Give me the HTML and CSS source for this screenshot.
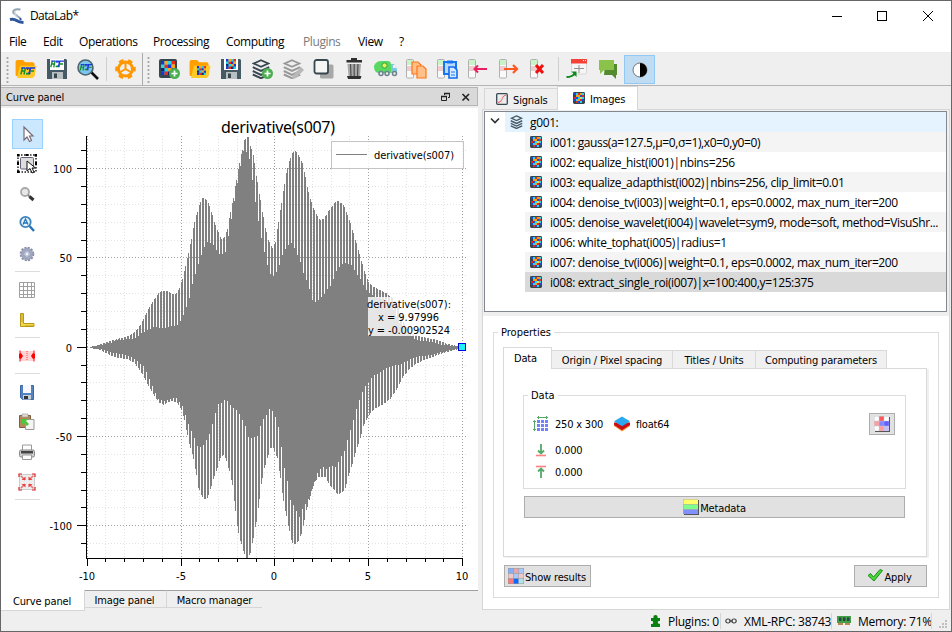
FILE: index.html
```html
<!DOCTYPE html>
<html lang="en">
<head>
<meta charset="utf-8">
<title>DataLab*</title>
<link rel="stylesheet" href="styles.css">
</head>
<body>
<svg class="defs" width="0" height="0" aria-hidden="true">
  <symbol id="mosaic" viewBox="0 0 12 12">
    <rect width="12" height="12" fill="#28d8e8"/>
    <path fill="#1238d8" d="M0 0h3v3H0zM6 3h3v3H6zM0 9h3v3H0zM9 6h3v3H9z"/>
    <path fill="#f02818" d="M3 3h3v3H3zM9 0h3v3H9zM3 9h3v3H3z"/>
    <path fill="#ffa418" d="M3 0h3v3H3zM9 3h3v3H9zM6 6h3v3H6z"/>
    <path fill="#102878" d="M6 9h3v3H6zM0 6h3v3H0z"/>
  </symbol>
  <symbol id="image" viewBox="0 0 12 12">
    <rect width="12" height="12" rx="1.4" fill="#37474f"/>
    <path fill="#1848e0" d="M1 1h2v2H1zM7 3h2v2H7zM3 5h2v2H3zM9 7h2v2H9zM1 7h2v2H1zM5 9h2v2H5z"/>
    <path fill="#ff9c10" d="M3 3h2v2H3zM5 3h2v2H5zM7 1h2v2H7zM5 7h2v2H5z"/>
    <path fill="#e82820" d="M5 1h2v2H5zM1 5h2v2H1zM9 3h2v2H9zM3 9h2v2H3zM7 7h2v2H7z"/>
    <path fill="#28d8e8" d="M3 1h2v2H3zM9 1h2v2H9zM5 5h2v2H5zM9 5h2v2H9zM3 7h2v2H3zM7 9h2v2H7z"/>
    <path fill="#f4d840" d="M7 5h2v2H7z"/>
  </symbol>
  <symbol id="plus" viewBox="0 0 11 11"><circle cx="5.500" cy="5.500" r="5.500" fill="#4caf50"/><path d="M5.500 2.500v6M2.500 5.500h6" stroke="#fff" stroke-width="1.700"/></symbol>
  <symbol id="folder" viewBox="0 0 22 19"><path fill="#ffa000" d="M0 2q0-2 2-2h6l2 2.500h8q2 0 2 2V17H1q-1 0-1-2z"/><path fill="#ffca28" d="M4.500 6H21q1.400 0 1 1.400l-2.300 9.700q-.5 1.900-2 1.900H1.500z"/></symbol>
  <symbol id="floppy" viewBox="0 0 20 20"><path fill="#455a64" d="M0 0h19l1 1v19H0z"/><path fill="#fff" d="M3 0h14v11H3z"/><path fill="#b8c0c4" d="M5 13h11v7H5z"/><path fill="#37474f" d="M7 14.500h3V19H7z"/></symbol>
  <symbol id="hdf" viewBox="0 0 15 8"><g fill="none" stroke-width="1.400"><path stroke="#129028" d="M2.500 .5L.8 7.500M5.500 .5L4 7.500M2 4h3"/><path stroke="#1838e0" d="M1.500 1H5M6 1h3q2 2-.5 5.500H6.500M15 1h-4.500L9.500 7.500M7.500 1v2"/><path stroke="#129028" d="M10.500 4H14M6 6.700h3"/></g></symbol>
  <symbol id="layers" viewBox="0 0 18 20"><path fill="none" stroke="currentColor" stroke-width="1.800" d="M9 1.200l7.200 3.300L9 7.800 1.800 4.500z"/><path fill="none" stroke="currentColor" stroke-width="2" d="M.8 8.200L9 12l8.200-3.800M.8 12L9 15.800 17.200 12M.8 15.500L9 19.200l8.200-3.700"/></symbol>
  <symbol id="stack" viewBox="0 0 8 20"><rect x=".5" y=".5" width="7" height="18.500" rx="1" fill="#fafafa" stroke="#b0b0b0"/><path fill="#c8f5c8" d="M1 1h6v5H1z"/><path fill="#f0cccc" d="M1 7h6v5H1z"/></symbol>
</svg>

<div class="window">
  <header class="titlebar">
    <svg class="logo" viewBox="0 0 16 16"><path d="M11.500 1.500Q3 .5 4.500 5q4 3.500 6.500 5" fill="none" stroke="#90a4b0" stroke-width="2"/><path d="M6 3q-1 4 3 7" fill="none" stroke="#cfd8dc" stroke-width="1.500"/><path d="M1 11.500q4-.8 6.500 1t7 2" fill="none" stroke="#2f559c" stroke-width="3"/><path d="M11 10l1 2" stroke="#2f559c" stroke-width="2"/></svg>
    <h1>DataLab*</h1>
    <div class="caption-buttons">
      <svg viewBox="0 0 46 28"><path d="M18 14.500h10" stroke="#000"/></svg>
      <svg viewBox="0 0 46 28"><rect x="17.500" y="9.500" width="9" height="9" fill="none" stroke="#000"/></svg>
      <svg viewBox="0 0 46 28"><path d="M17 9l10 10M27 9L17 19" stroke="#000"/></svg>
    </div>
  </header>
  <nav class="menubar">
    <span class="m-file">File</span><span class="m-edit">Edit</span><span class="m-ops">Operations</span><span class="m-proc">Processing</span><span class="m-comp">Computing</span><span class="m-plug">Plugins</span><span class="m-view">View</span><span>?</span>
  </nav>

  <div class="toolbar">
    <i class="grip"></i>
    <svg class="ti" viewBox="0 0 31 30"><use href="#folder" x="5" y="6" width="22" height="18"/><use href="#hdf" x="10" y="13" width="15" height="8"/></svg>
    <svg class="ti" viewBox="0 0 31 30"><use href="#floppy" x="6" y="5" width="20" height="20"/><use href="#hdf" x="9" y="6" width="14" height="8"/></svg>
    <svg class="ti" viewBox="0 0 31 30"><path d="M19 18l7 7" stroke="#111" stroke-width="2.600"/><circle cx="13.500" cy="13.500" r="7.500" fill="#7cc5ee" stroke="#50626c" stroke-width="1.600"/><use href="#hdf" x="7.500" y="9.500" width="13" height="7.500"/></svg>
    <i class="sep s1"></i>
    <svg class="ti gear" viewBox="0 0 31 30"><g fill="none" stroke="#ff9800"><circle cx="15.500" cy="15" r="7" stroke-width="3"/><circle cx="15.500" cy="15" r="9" stroke-width="2.600" stroke-dasharray="4.700 4.725" stroke-dashoffset="2.350"/><path d="M15.500 15V8M15.500 15l-6 3.500M15.500 15l6 3.500" stroke-width="2"/></g></svg>
    <i class="divider"></i><i class="grip g2"></i>
    <svg class="ti" viewBox="0 0 31 30"><rect x="6" y="5" width="18" height="19" rx="2" fill="#37474f"/><use href="#mosaic" x="8" y="7" width="14" height="14"/><use href="#plus" x="16" y="14" width="11" height="11"/></svg>
    <svg class="ti" viewBox="0 0 31 30"><use href="#folder" x="5" y="6" width="22" height="18"/><use href="#mosaic" x="13" y="12" width="9" height="9"/></svg>
    <svg class="ti" viewBox="0 0 31 30"><use href="#floppy" x="6" y="5" width="20" height="20"/><use href="#mosaic" x="11" y="5" width="10" height="10"/></svg>
    <svg class="ti dark" viewBox="0 0 31 30"><use href="#layers" x="6" y="5" width="18" height="20"/><use href="#plus" x="16" y="14" width="11" height="11"/></svg>
    <svg class="ti gray" viewBox="0 0 31 30"><use href="#layers" x="6" y="5" width="18" height="20"/><path d="M15 25l1-4 8-8 3 3-8 8z" fill="#b8b8b8"/></svg>
    <svg class="ti" viewBox="0 0 31 30"><rect x="12" y="10.500" width="13.500" height="14" rx="1.500" fill="#a8a8a8"/><rect x="6.500" y="6" width="13.500" height="13.500" rx="2" fill="#f5f5f5" stroke="#37474f" stroke-width="1.800"/></svg>
    <svg class="ti" viewBox="0 0 31 30"><path fill="#303030" d="M12 4h6v2h5v2.500H7.500V6H12zM8 22h14.500l-1 3H9z"/><path fill="#a8a8a8" d="M8.500 10h13.500l-1 12H9.500z"/><path stroke="#505050" stroke-width="1.200" d="M11.500 10l.5 12M15.200 10v12M19 10l-.5 12"/></svg>
    <svg class="ti" viewBox="0 0 31 30"><path d="M4 12q2-5 7-5h7q3 0 3 4v8H8q-4-1-4-7z" fill="#58d862"/><circle cx="14.500" cy="11.500" r="2.600" fill="#e8f060" stroke="#2fa83c"/><path d="M21 10h3l3 5v4h-6z" fill="#7cc8dc"/><path d="M23 11h2l1 3h-3z" fill="#eef"/><g fill="#eee" stroke="#6c8090" stroke-width="1.500"><circle cx="11" cy="19.500" r="2"/><circle cx="17" cy="19.500" r="2"/><circle cx="24.500" cy="19.500" r="2"/></g></svg>
    <svg class="ti" viewBox="0 0 31 30"><use href="#stack" x="5" y="5" width="8" height="20"/><g fill="#ffc089" stroke="#ff7518" stroke-width="1.200"><path d="M11 8h6l3 3v9h-9z"/><path d="M16 12h6l3 3v9h-9z"/></g></svg>
    <svg class="ti" viewBox="0 0 31 30"><use href="#stack" x="5" y="5" width="8" height="20"/><path d="M12 8h12v12H12z" fill="#b8dafc" stroke="#1877f0" stroke-width="2"/><path d="M15 6.500h6v3h-6z" fill="#1877f0"/><path d="M17 13h5l3 3v8h-8z" fill="#d8ebff" stroke="#0f6cf0" stroke-width="1.600"/><path d="M19 18h4M19 21h4" stroke="#1877f0"/></svg>
    <svg class="ti" viewBox="0 0 31 30"><use href="#stack" x="5" y="5" width="8" height="20"/><path d="M11 15h13M15 11.500L11.500 15l3.500 3.500" fill="none" stroke="#e91e63" stroke-width="2"/></svg>
    <svg class="ti" viewBox="0 0 31 30"><use href="#stack" x="5" y="5" width="8" height="20"/><path d="M10 15h12M19 11l4 4-4 4" fill="none" stroke="#ff5722" stroke-width="2.200"/></svg>
    <svg class="ti" viewBox="0 0 31 30"><use href="#stack" x="5" y="5" width="8" height="20"/><path d="M11 11l7 8M18 11l-7 8" stroke="#f01010" stroke-width="3"/></svg>
    <i class="sep s2"></i>
    <svg class="ti" viewBox="0 0 31 30"><rect x="9.500" y="5.500" width="15" height="14.500" rx="1" fill="#f6f6f6" stroke="#d8d8d8"/><path fill="#f44336" d="M9 5h16v4.500H9z"/><path fill="#fff" d="M21 6h1v1h-1zM23 6h1v1h-1z"/><path d="M17 11v8M12 14.500h10" stroke="#909090"/><path d="M4.500 23q6 0 9-4" fill="none" stroke="#0a8a1a" stroke-width="2"/><path fill="#0a8a1a" d="M9.500 17.500h5V23z"/></svg>
    <svg class="ti" viewBox="0 0 31 30"><path d="M12 10h12v11h-1v4l-4-4h-8z" fill="#558b2f"/><path d="M6 6h15v10H11l-4 4v-4H6z" fill="#8bc34a"/></svg>
    <span class="active-tool"><svg viewBox="0 0 16 16"><circle cx="8" cy="8" r="7" fill="#fff" stroke="#777"/><path d="M8 1a7 7 0 0 1 0 14z"/></svg></span>
  </div>

  <main class="main">
    <section class="dock">
      <div class="dock-title"><span class="tah">Curve panel</span>
        <svg viewBox="0 0 36 14"><path d="M3.500 5V3.500h5v4H7M.5 6.500h5v4h-5z" fill="none" stroke="#222" stroke-width="1"/><path d="M3 3.500h6M0 6.500h6" stroke="#222" stroke-width="1.500"/><path d="M21.500 4l6.500 6.500M28 4l-6.500 6.500" stroke="#222" stroke-width="1.600"/></svg>
      </div>
      <div class="dock-body">
        <aside class="plot-tools">
          <span class="pt selected"><svg viewBox="0 0 20 20"><path d="M7 3v13l3-3 2.500 4.500 2-1L12.500 12H16z" fill="#fff" stroke="#776c76" stroke-width="1.200"/></svg></span>
          <span class="pt"><svg viewBox="0 0 20 20"><rect x="1" y="1" width="18" height="17" fill="#fff" stroke="#222" stroke-width="1.500" stroke-dasharray="1.500 1.500"/><rect x="3.500" y="3.500" width="13" height="11.500" rx="1" fill="#ddd" stroke="#67617c"/><path d="M0 0h2.500v2.500H0zM8.500 0h3v2h-3zM17.500 0H20v2.500h-2.500zM0 8h2v3H0zM18 8h2v3h-2zM0 16.500h2.500V19H0z"/><path d="M10 7v10l3-2.500 2 4.500 2-1-2-4h3.500z" fill="#fff" stroke="#111"/></svg></span>
          <span class="pt"><svg viewBox="0 0 20 20"><circle cx="8" cy="8" r="4" fill="#e8e8e8" stroke="#a8a8a8" stroke-width="1.800"/><path d="M11 11l2 2" stroke="#888" stroke-width="2"/><path d="M12.500 12.500l4 3.500" stroke="#333" stroke-width="3"/></svg></span>
          <span class="pt"><svg viewBox="0 0 20 20"><circle cx="8.500" cy="8" r="5.200" fill="#e8f4fc" stroke="#3d83bd" stroke-width="1.800"/><path d="M12.500 12l4.500 5" stroke="#2674b4" stroke-width="2.400"/><path d="M6 10.500l2.500-5.500 2.500 5.500M7 9h3" fill="none" stroke="#2674b4" stroke-width="1.300"/></svg></span>
          <span class="pt"><svg viewBox="0 0 20 20"><circle cx="10" cy="10" r="4.300" fill="none" stroke="#a0a8c0" stroke-width="3.800"/><circle cx="10" cy="10" r="6.500" fill="none" stroke="#868da4" stroke-width="1.600" stroke-dasharray="2.100 1.300"/><circle cx="10" cy="10" r="2" fill="#eef" stroke="#b0b8cc"/></svg></span>
          <i></i>
          <span class="pt"><svg viewBox="0 0 20 20"><path d="M2.500 2.500h15v15h-15zM6.500 2v16M10.500 2v16M14.500 2v16M2 6.500h16M2 10.500h16M2 14.500h16" fill="none" stroke="#a0a0a0"/></svg></span>
          <span class="pt ruler"><svg viewBox="0 0 20 20"><path d="M3.500 3.500h3v10h10.500v3H3.500z" fill="#f0d84a" stroke="#b89a18"/><path d="M4 5h2M4 7h2M4 9h2M4 11h2M9 15v1.500M11 15v1.500M13 15v1.500M15 15v1.500" stroke="#a08410" stroke-width=".6"/></svg></span>
          <i></i>
          <span class="pt cut"><svg viewBox="0 0 20 20"><path fill="#ffd4d4" d="M3 5h14v10H3z"/><path d="M3 4.500v11M17 4.500v11" stroke="#f00"/><path d="M10 5v10" stroke="#f44" stroke-dasharray="1 1"/><path fill="#f00" d="M2 8l2-1 2 3-2 3-2-1zM18 8l-2-1-2 3 2 3 2-1z"/></svg></span>
          <i></i>
          <span class="pt"><svg viewBox="0 0 20 20"><path d="M3.500 3.500h13v14h-11l-2-2z" fill="#5482c0" stroke="#3c68a8"/><path fill="#f8f8ff" d="M6 3h8v8H6z"/><path fill="#c8d0d8" d="M6 13h8v4.500H6z"/><path fill="#333" d="M7 14h4v3H7z"/></svg></span>
          <span class="pt"><svg viewBox="0 0 20 20"><path d="M2.500 3.500h11v12h-11z" fill="#b48858" stroke="#80603c"/><path fill="#ddd" stroke="#999" stroke-width=".6" d="M5 2h6v3H5z"/><path d="M8.500 7.500h8.500v10H8.500z" fill="#f4f4f4" stroke="#999"/><path d="M5 7h6L9 9l3 3-2 2-3-3-2 2z" fill="#4cc83c"/></svg></span>
          <span class="pt"><svg viewBox="0 0 20 20"><path d="M5.500 3h9v6h-9z" fill="#fff" stroke="#999"/><rect x="2.500" y="8" width="15" height="7" rx="1.500" fill="#d0d0d0" stroke="#888"/><path fill="#444" d="M4 9h12v2.500H4z"/><path d="M5.500 13h9v4.500h-9z" fill="#fff" stroke="#999"/></svg></span>
          <span class="pt"><svg viewBox="0 0 20 20"><rect x="2.500" y="2.500" width="15" height="15" rx="3" fill="#eee" stroke="#ccc"/><path d="M4 4l4 4M16 4l-4 4M4 16l4-4M16 16l-4-4" stroke="#e87070" stroke-width="1.500"/><path fill="#e84040" d="M4.500 8h4V4.500zM15.500 8h-4V4.500zM4.500 12h4v3.500zM15.500 12h-4v3.500z"/><path d="M2 5V2h3M15 2h3v3M2 15v3h3M18 15v3h-3" fill="none" stroke="#d02020" stroke-width="1.200"/></svg></span>
          <i></i>
        </aside>
        <svg class="plot" id="plot" viewBox="45 108 433 482" width="433" height="482"></svg>
      </div>
      <div class="dock-tabs tah"><b class="current">Curve panel</b><b class="t2">Image panel</b><b class="t3">Macro manager</b></div>
    </section>

    <section class="side">
      <div class="side-tabs tah">
        <b><svg viewBox="0 0 12 12"><rect x=".7" y=".7" width="10.600" height="10.600" rx="1" fill="#eee" stroke="#37474f" stroke-width="1.300"/><path d="M2 9.500q3 0 4-3.500t4-4" fill="none" stroke="#f05050"/><path d="M2 6h8M6 2v8" stroke="#ccc" stroke-width=".5"/></svg>Signals</b>
        <b class="current"><svg><use href="#image"/></svg>Images</b>
      </div>
      <div class="side-pane">
        <div class="tree-wrap">
          <ul class="tree">
            <li class="group"><svg class="chev" viewBox="0 0 10 8"><path d="M1 1.500l4 4 4-4" fill="none" stroke="#333" stroke-width="1.700"/></svg><span><svg class="gl" ><use href="#layers"/></svg>g001:</span></li>
            <li><svg><use href="#image"/></svg>i001: gauss(a=127.5,μ=0,σ=1),x0=0,y0=0)</li>
            <li><svg><use href="#image"/></svg>i002: equalize_hist(i001)|nbins=256</li>
            <li><svg><use href="#image"/></svg>i003: equalize_adapthist(i002)|nbins=256, clip_limit=0.01</li>
            <li><svg><use href="#image"/></svg>i004: denoise_tv(i003)|weight=0.1, eps=0.0002, max_num_iter=200</li>
            <li><svg><use href="#image"/></svg>i005: denoise_wavelet(i004)|wavelet=sym9, mode=soft, method=VisuShr...</li>
            <li><svg><use href="#image"/></svg>i006: white_tophat(i005)|radius=1</li>
            <li><svg><use href="#image"/></svg>i007: denoise_tv(i006)|weight=0.1, eps=0.0002, max_num_iter=200</li>
            <li class="picked"><svg><use href="#image"/></svg>i008: extract_single_roi(i007)|x=100:400,y=125:375</li>
          </ul>
        </div>
        <div class="props tah">
          <fieldset class="prop-box"><legend>Properties</legend>
            <div class="prop-tabs"><b class="current">Data</b><b class="p2">Origin / Pixel spacing</b><b class="p3">Titles / Units</b><b class="p4">Computing parameters</b></div>
            <div class="prop-pane">
              <fieldset class="data-box"><legend>Data</legend>
                <div class="data-row">
                  <svg viewBox="0 0 16 16"><path fill="#6f83ff" d="M4 4h3v3H4zM8 4h3v3H8zM12 4h3v3h-3zM4 8h3v3H4zM8 8h3v3H8zM12 8h3v3h-3zM4 12h3v3H4zM8 12h3v3H8zM12 12h3v3h-3z"/><path d="M4 1.500h11M5.500 0v3M13.500 0v3M1.500 4v11M0 5.500h3M0 13.500h3" stroke="#55a868"/></svg>
                  <span class="dims">250 x 300</span>
                  <svg viewBox="0 0 16 16"><path fill="#ff9838" d="M0 10l8 5.500 8-5.500V8H0z"/><path fill="#c80f18" d="M0 6.500v2.500l8 5.200L16 9V6.500z"/><path fill="#2aa8f0" d="M0 5.200L8 .5l8 4.700-8 5z"/></svg>
                  <span>float64</span>
                  <span class="grid-btn"><svg viewBox="0 0 16 16"><path fill="#555" d="M1 1h15v15H1z"/><path fill="#c8c8d0" d="M0 0h15v15H0z"/><path fill="#fff" d="M.5.5h4.300v4.300H.5zM10.200.5h4.600v4.300h-4.600zM.5 10.200h4.300v4.600H.5z"/><path fill="#ff5a5a" d="M5.300.5h4.500v4.300H5.300z"/><path fill="#ff9c9c" d="M.5 5.200h4.300v4.600H.5zM5.300 10.200h4.500v4.600H5.300z"/><path fill="#8088ff" d="M5.300 5.200h4.500v4.600H5.300z"/><path fill="#5f60ff" d="M10.200 5.200h4.600v4.600h-4.600z"/><path fill="#c4c0ff" d="M10.200 10.200h4.600v4.600h-4.600z"/></svg></span>
                </div>
                <div class="data-row small"><svg viewBox="0 0 16 16"><path d="M8 2v9M5 8.500l3 3 3-3" fill="none" stroke="#55a868" stroke-width="1.800"/><path d="M3 13.500h10" stroke="#ff8080" stroke-width="1.600"/></svg><span>0.000</span></div>
                <div class="data-row small"><svg viewBox="0 0 16 16"><path d="M8 14V5M5 7.500l3-3 3 3" fill="none" stroke="#55a868" stroke-width="1.800"/><path d="M3 2.500h10" stroke="#ff8080" stroke-width="1.600"/></svg><span>0.000</span></div>
              </fieldset>
              <div class="btn meta"><svg viewBox="0 0 16 16"><path fill="#555" d="M1 1h15v15H1z"/><path fill="#aaa" d="M0 0h15v15H0z"/><path fill="#ffff6a" d="M.5.500h14.500v4.700H.5z"/><path fill="#7dff8a" d="M.5 5.700h14.500v4.500H.5z"/><path fill="#8090ff" d="M.5 10.700h14.500V15H.5z"/></svg><span>Metadata</span></div>
            </div>
            <div class="actions">
              <div class="btn results"><svg viewBox="0 0 16 16"><path fill="#999" d="M0 0h16v16H0z"/><path fill="#80b0ff" d="M.500.500h4.700v4.700H.5z"/><path fill="#e8a8a8" d="M5.800.500h4.500v4.700H5.800z"/><path fill="#a8c8ff" d="M10.800.500h4.700v4.700h-4.700zM5.800 5.700h4.500v4.600H5.800z"/><path fill="#f0c8c8" d="M.5 5.700h4.700v4.600H.5zM10.800 5.700h4.700v4.600h-4.700z"/><path fill="#ff7878" d="M.5 10.800h4.700v4.700H.5z"/><path fill="#0868ff" d="M5.800 10.800h4.500v4.700H5.800z"/><path fill="#b0e0e8" d="M10.800 10.800h4.700v4.700h-4.700z"/></svg><span>Show results</span></div>
              <div class="btn apply"><svg viewBox="0 0 16 16"><path d="M1 7.500l2.500-2 3 3.500L13 1.500l2.500 1L7 13z" fill="#46d838" stroke="#1f8a1c"/></svg><span>Apply</span></div>
            </div>
          </fieldset>
        </div>
      </div>
    </section>
  </main>

  <footer class="status">
    <svg class="st-plug" viewBox="0 0 10 12"><path fill="#0a8010" d="M0 3h2.500Q2 0 4.500 0T6.500 3H9v3H7.500q-1.500 1.500 0 2.800H9V12H0V9h1.500q1.500-1.500 0-3H0z"/></svg><span class="s-p">Plugins: 0</span><i></i>
    <svg class="st-link" viewBox="0 0 12 8"><g fill="none" stroke="#444" stroke-width="1.200"><rect x=".8" y="2" width="4.400" height="4" rx="2"/><rect x="6.800" y="2" width="4.400" height="4" rx="2"/><path d="M4 4h4"/></g></svg><span class="s-x">XML-RPC: 38743</span><i></i>
    <svg class="st-mem" viewBox="0 0 14 10"><path fill="#43a047" d="M0 0h14v7H0z"/><path fill="#2f4050" d="M2 1.500h2.500V5H2zM6 1.500h2.500V5H6zM10 1.500h2.500V5H10z"/><path fill="#b88850" d="M1 7h5v2H1zM8 7h5v2H8z"/></svg><span class="s-m">Memory: 71%</span><i></i>
    <svg class="size-grip" viewBox="0 0 9 9"><path fill="#bfbfbf" d="M6 0h2v2H6zM3 3h2v2H3zM6 3h2v2H6zM0 6h2v2H0zM3 6h2v2H3zM6 6h2v2H6z"/></svg>
  </footer>
</div>
<script src="plot.js"></script>
</body>
</html>
```
FILE: styles.css
```css
* { box-sizing: border-box; }
body { margin: 0; font: 12px/16px "Open Sans", "Noto Sans", sans-serif; color: #000; }
ul { margin: 0; padding: 0; list-style: none; }
b { font-weight: normal; }
svg { flex: none; display: block; }
.defs { position: absolute; }
.tah { font-family: "DejaVu Sans Condensed", "DejaVu Sans", sans-serif; font-stretch: condensed; font-size: 11px; letter-spacing: -.15px; }

.window { width: 952px; height: 632px; border: 1px solid #666; background: #efefef; display: flex; flex-direction: column; overflow: hidden; white-space: nowrap; }

.titlebar { height: 29px; background: #fff; display: flex; align-items: center; padding-left: 8px; }
.logo { width: 16px; height: 16px; }
h1 { margin: 1px 0 0 5px; font-size: 12px; font-weight: normal; letter-spacing: -.6px; }
.caption-buttons { margin: 0 -1px 0 auto; display: flex; }
.caption-buttons svg { width: 46px; height: 28px; }

.menubar { height: 23px; background: #fff; border-bottom: 1px solid #ececec; display: flex; align-items: center; padding: 1px 0 0 8px; letter-spacing: -.4px; }
.menubar span { flex: none; }
.m-file { width: 34px; }
.m-edit { width: 36px; }
.m-ops { width: 74px; }
.m-proc { width: 73px; }
.m-comp { width: 77px; }
.m-plug { width: 55px; color: #7a7a7a; }
.m-view { width: 41px; }

.toolbar { height: 33px; display: flex; align-items: center; border-bottom: 1px solid #b4b4b4; padding-left: 5px; }
.ti { width: 31px; height: 30px; }
.grip { width: 3px; height: 27px; margin-right: 1px; background: radial-gradient(circle, #a8a8a8 1px, transparent 1.200px) 0 0 / 3px 4px; }
.sep { width: 1px; height: 24px; background: #cfcfcf; flex: none; }
.s1 { margin: 0 3px; }
.s2 { margin: 0 3px 0 2px; }
.divider { width: 1px; height: 32px; background: #aaa; margin: 0 4px 0 1px; }
.g2 { margin-right: 3px; }
.dark { color: #37474f; }
.gray { color: #989898; }
.active-tool { width: 31px; height: 29px; border: 1px solid #90c8f6; background: #c0dcf3; display: grid; place-items: center; padding-top: 2px; }
.active-tool svg { width: 16px; height: 16px; }

.main { flex: 1; display: flex; min-height: 0; }
.dock { width: 477px; padding-top: 1px; display: flex; flex-direction: column; }
.dock-title { height: 19px; border: 1px solid #b4b4b4; border-left: 0; background: #d9d9d9; display: flex; align-items: center; justify-content: space-between; padding-left: 5px; margin-bottom: 2px; }
.dock-title svg { width: 36px; height: 14px; }
.dock-title span { padding-top: 3px; }
.dock-body { height: 482px; background: #fff; display: flex; }
.plot-tools { width: 44px; padding: 11px 0 0 11px; }
.pt { width: 31px; height: 30px; display: grid; place-items: center; padding-right: 1px; }
.pt svg { width: 20px; height: 20px; }
.pt.selected { border: 1px solid #99d1ff; background: #cce8ff; }
.plot-tools i { display: block; width: 25px; height: 1px; background: #dcdcdc; margin: 2px 0 3px 3px; }
.plot { font-family: "DejaVu Sans Condensed", sans-serif; font-stretch: condensed; font-size: 11px; }
.plot .heading { font: 16px "Noto Sans", sans-serif; }
.axis { stroke: #000; fill: none; shape-rendering: crispEdges; }
.minor { stroke: #e3e3e3; stroke-dasharray: 1 2; shape-rendering: crispEdges; }
.major { stroke: #a0a0a0; stroke-dasharray: 1 2; shape-rendering: crispEdges; }
.curve { fill: #808080; shape-rendering: crispEdges; }
.dock-tabs { height: 21px; display: flex; align-items: flex-start; }
.dock-tabs::after { content: ""; flex: 1; border-top: 1px solid #a0a0a0; }
.dock-tabs b { height: 18px; border-top: 1px solid #a0a0a0; border-right: 1px solid #d6d6d6; border-bottom: 1px solid #d6d6d6; text-align: center; line-height: 20px; }
.dock-tabs .current { width: 84px; height: 21px; background: #fff; border-top: 0; line-height: 24px; padding-right: 1px; }
.dock-tabs .t2 { width: 82px; padding-right: 2px; }
.dock-tabs .t3 { width: 95px; border-right: 0; }

.side { flex: 1; padding: 0 1px 0 4px; display: flex; flex-direction: column; }
.side-tabs { height: 23px; display: flex; align-items: flex-end; padding-left: 2px; }
.side-tabs b { height: 21px; width: 73px; border: 1px solid #d6d6d6; border-width: 1px 0 0 1px; display: flex; align-items: center; padding: 3px 0 0 11px; }
.side-tabs svg { width: 12px; height: 12px; margin: 0 5px 4px 0; }
.side-tabs .current { width: 81px; height: 24px; margin-bottom: -1px; padding-left: 15px; background: #fff; border-width: 1px 1px 0; position: relative; }
.side-pane { height: 501px; border: 1px solid #d6d6d6; background: #fff; }
.tree-wrap { height: 206px; padding: 1px 2px 0 1px; background: #efefef; }
.tree { height: 201px; border: 1px solid #828790; background: #fff; letter-spacing: -.37px; }
.tree li { height: 20px; margin-left: 40px; padding: 2px 0 0 5px; display: flex; align-items: center; }
.tree li svg { width: 12px; height: 12px; margin: 0 8px 3px 0; }
.tree li:nth-child(even) { background: #f4f4f4; }
.tree .group { margin-left: 0; padding-top: 0; }
.tree .group .chev { width: 10px; height: 8px; margin-right: 5px; }
.tree .group span { flex: 1; height: 20px; display: flex; align-items: center; background: #e5f3ff; padding: 2px 0 0 4px; }
.tree .group .gl { width: 15px; height: 14px; margin-right: 6px; color: #455a64; }
.tree .picked { background: #d9d9d9; }

fieldset { margin: 0; padding: 0; border: 1px solid #dcdcdc; min-width: 0; }
legend { margin-left: 4px; padding: 0 3px; height: 14px; line-height: 15px; letter-spacing: 0; }
.props { padding: 9px 10px 0; }
.prop-box { height: 273px; width: 446px; padding: 0 10px 0 9px; }
.prop-box > legend { margin-left: -5px; }
.prop-tabs { display: flex; align-items: flex-end; height: 30px; margin-bottom: -1px; }
.prop-tabs b { height: 19px; border: 1px solid #d9d9d9; border-left: 0; background: #f0f0f0; text-align: center; line-height: 19px; }
.prop-tabs .current { width: 49px; height: 22px; background: #fff; border: 1px solid #d9d9d9; border-bottom: 0; line-height: 22px; padding-right: 4px; }
.p2 { width: 121px; }
.p3 { width: 83px; }
.p4 { width: 131px; }
.prop-pane { width: 424px; height: 189px; border: 1px solid #d9d9d9; border-top-width: 0; padding: 20px 19px 0; background: linear-gradient(#d9d9d9, #d9d9d9) 48px 0 / 100% 1px no-repeat; box-shadow: 2px 1px 0 #f0f0f0; }
.data-box { width: 383px; height: 101px; }
.data-row { display: flex; align-items: center; height: 22px; padding-left: 9px; margin-top: 12px; letter-spacing: -.2px; }
.data-row.small { margin-top: 4px; }
.data-row.small + .small { margin-top: 0; }
.data-row svg { width: 16px; height: 16px; margin-right: 6px; }
.data-row svg { margin-top: -2px; }
.dims { width: 59px; }
.grid-btn { width: 26px; height: 22px; border: 1px solid #adadad; background: #e1e1e1; margin: -2px 10px 0 auto; display: grid; place-items: center; }
.grid-btn svg { margin: 0; }
.btn { height: 22px; border: 1px solid #adadad; background: #e1e1e1; display: flex; align-items: center; justify-content: center; gap: 1px; }
.btn svg { width: 16px; height: 16px; }
.btn span { padding-top: 3px; }
.meta { width: 381px; margin: 7px 0 0 1px; }
.actions { display: flex; justify-content: space-between; margin: 8px 0 0 1px; width: 423px; }
.results { width: 87px; padding-right: 1px; }
.apply { width: 73px; padding-right: 2px; }

.status { height: 20px; display: flex; align-items: center; padding-left: 650px; letter-spacing: -.25px; }
.status span { padding-top: 1px; }
.status i { width: 1px; height: 16px; background: #d4d4d4; }
.st-plug { width: 10px; height: 12px; margin-right: 7px; }
.s-p { width: 52px; }
.st-link { width: 12px; height: 8px; margin: 0 7px 0 4px; }
.s-x { width: 87px; }
.st-mem { width: 14px; height: 10px; margin: 0 7px 0 5px; }
.s-m { width: 73px; }
.size-grip { width: 9px; height: 9px; margin: 7px 0 0 7px; }
```
FILE: plot.js
```js
// Envelope samples [x, y] in window pixels, joined linearly.
const topOuter = [90,347,100,344,110,341,120,338,128,336,133,333,138,328,142,321,146,313,149,307,152,302,156,296,159,292,162,291,166,291,173,294,177,293,180,285,182,279,186,262,190,244,194,222,198,208,201,199,204,197,208,203,212,215,216,228,221,239,224,237,227,229,230,212,233,198,237,174,240,158,242,150,244,140,246,137,248,137,250,146,253,155,255,170,258,188,262,212,265,228,268,240,272,248,275,242,278,222,282,197,285,178,288,163,292,153,295,151,298,155,302,163,305,177,308,192,312,205,315,213,320,220,323,219,327,213,330,208,335,202,338,201,343,205,348,217,353,233,358,250,363,268,368,282,373,287,380,290,387,294,392,298,398,308,403,322,409,332,415,335,427,338,437,340,447,344,457,346,462,347];
const topInner = [90,347,100,345,110,343,117,340,133,339,143,332,153,327,163,328,177,325,182,318,188,302,193,280,197,267,200,257,206,242,212,243,218,254,221,255,225,252,230,225,235,195,238,177,242,155,244,147,249,159,252,180,255,202,258,221,262,243,265,256,268,269,271,277,274,276,277,270,280,263,283,251,289,244,292,243,295,250,298,258,301,264,304,277,307,282,310,293,313,303,319,299,325,293,328,287,331,285,334,276,337,269,343,263,352,265,355,272,361,280,364,287,367,291,373,296,390,303,400,325,415,340,430,342,443,345,462,347];
const bottomOuter = [90,347,100,349,107,353,117,357,127,358,133,361,138,367,143,375,148,385,153,393,158,401,163,404,168,401,173,400,177,402,182,411,185,423,188,440,192,453,195,468,198,487,202,496,204,498,207,497,210,488,213,478,217,467,220,457,223,454,225,457,230,473,233,490,235,510,238,532,242,547,245,556,247,558,250,552,253,537,257,515,260,490,263,470,267,457,270,447,273,447,277,457,280,477,283,500,287,520,290,535,292,542,295,543,298,540,302,530,305,513,308,502,312,488,315,480,318,476,325,476,328,482,332,487,337,493,341,492,345,487,348,475,352,463,355,452,360,437,363,425,367,417,370,412,375,407,383,403,390,398,397,387,403,375,410,367,417,362,423,359,430,357,437,354,443,352,450,350,462,347];
const bottomInner = [90,347,100,348,110,351,127,354,133,357,143,365,148,375,153,388,158,398,163,400,175,396,182,405,188,423,192,432,198,447,202,445,207,438,210,430,215,412,218,403,222,401,225,398,228,401,232,406,237,410,240,414,243,422,246,427,248,436,251,437,257,435,260,425,263,418,266,414,269,408,272,410,275,416,278,426,281,446,284,467,287,480,290,499,293,504,296,510,299,516,302,508,305,503,308,498,312,487,317,472,322,465,325,468,328,467,331,464,334,467,337,464,340,456,343,453,346,443,349,432,352,423,355,411,358,401,361,394,364,386,370,378,373,374,379,372,385,367,393,365,400,363,407,360,412,357,420,355,430,354,445,350,462,347];

function at(points, x) {
  for (let i = 2; i < points.length; i += 2) {
    if (x <= points[i]) {
      const t = (x - points[i - 2]) / (points[i] - points[i - 2]);
      return Math.round(points[i - 1] + t * (points[i + 1] - points[i - 1]));
    }
  }
  return 347;
}

let minor = '', major = '', ticks = 'M86.500 136V558.500H462.500', labels = '', curve = '';
for (let v = -10; v <= 10; v++) {
  const x = Math.floor(274.9 + v * 18.77) + 0.5;
  const big = v % 5 === 0;
  if (big) major += `M${x} 136V558`; else minor += `M${x} 136V558`;
  ticks += `M${x} 558v${big ? 8 : 4}`;
  if (big) labels += `<text x="${x - 0.5}" y="580" text-anchor="middle">${v}</text>`;
}
for (let v = -110; v <= 110; v += 10) {
  const y = Math.floor(347.2 - v * 1.786) + 0.5;
  const big = v % 50 === 0;
  if (big) major += `M87 ${y}H466`; else minor += `M87 ${y}H466`;
  ticks += `M86 ${y}h${big ? -9 : -5}`;
  if (big) labels += `<text x="72" y="${y + 4}" text-anchor="end">${v}</text>`;
}
for (let x = 90; x < 462; x++) {
  const a = at(x % 3 === 0 ? topInner : topOuter, x);
  const b = at(x % 3 === 2 ? bottomInner : bottomOuter, x);
  curve += `M${x} ${a}h1V${b + 1}h-1z`;
}
document.getElementById('plot').innerHTML = `
  <path class="minor" d="${minor}"/><path class="major" d="${major}"/>
  <path class="curve" d="${curve}"/><path class="axis" d="${ticks}"/>${labels}
  <text class="heading" x="221" y="133" textLength="114">derivative(s007)</text>
  <rect x="331.500" y="141.500" width="132" height="27" fill="#fff" fill-opacity=".8" stroke="#c4c4c4"/>
  <path d="M336 154.500h31" stroke="#808080"/>
  <text x="374" y="159" textLength="80">derivative(s007)</text>
  <rect x="368" y="297" width="83" height="39" fill="#fff" fill-opacity=".8"/>
  <text x="367" y="308" textLength="84">derivative(s007):</text>
  <text x="378" y="321" textLength="61">x = 9.97996</text>
  <text x="368" y="334" textLength="82">y = -0.00902524</text>
  <rect x="458.500" y="343.500" width="7" height="7" fill="#20f0f8" stroke="#0000e0"/>`;
```
